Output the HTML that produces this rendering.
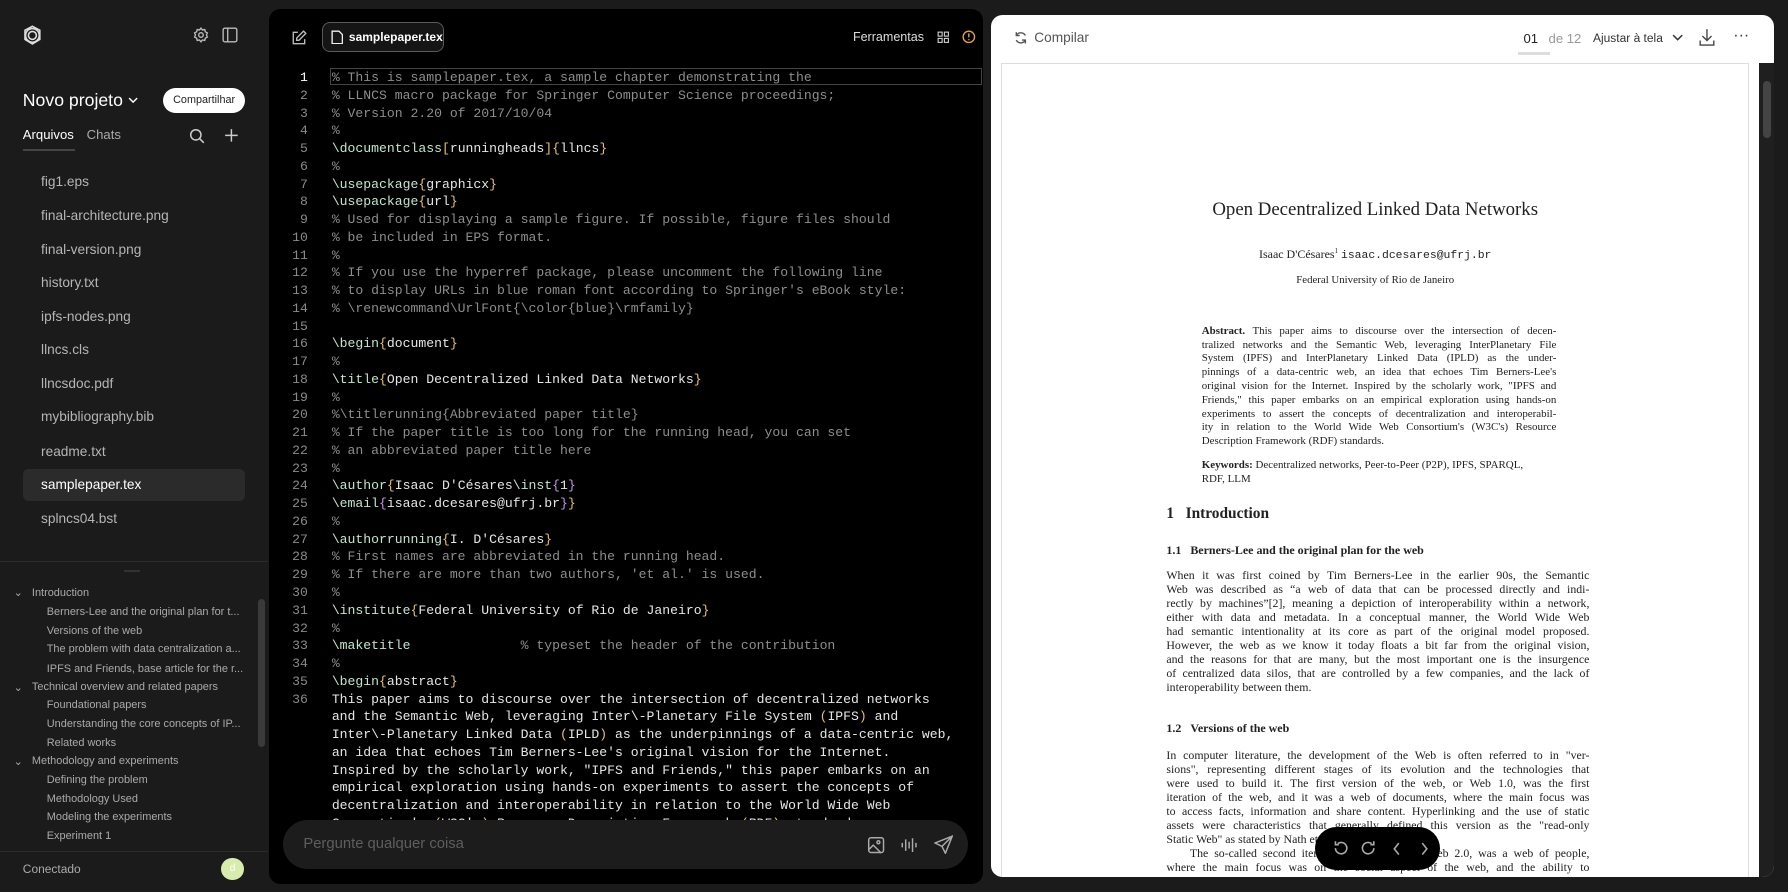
<!DOCTYPE html>
<html><head><meta charset="utf-8">
<style>
*{margin:0;padding:0;box-sizing:border-box}
html,body{width:1788px;height:892px;overflow:hidden;background:#1b1b1b}
#w{zoom:1.14031;width:1568px;height:782px;position:relative;font-family:"Liberation Sans",sans-serif;color:#ddd}
.a{position:absolute;white-space:nowrap}
.f{font-size:12px;color:#b5b5b5;left:36px}
.o{font-size:9.6px;color:#aaa}
#ed{position:absolute;left:236px;top:8px;width:626px;height:767px;background:#000;border-radius:10px;overflow:hidden}
.ln{position:absolute;left:0;width:34px;text-align:right;font:11.5px "Liberation Mono",monospace;color:#8a8a8a}
.cd{position:absolute;left:55px;font:11.5px "Liberation Mono",monospace;color:#e6e6e6;white-space:pre}
.c{color:#8d8d8d}.k{color:#bfe6cf}.b{color:#e8c06a}.m{color:#c792ea}
#pdf{position:absolute;left:869px;top:13px;width:687px;height:756px;background:#fff;border-radius:10px;overflow:hidden}
#pg{position:absolute;left:9px;top:42px;width:656px;height:720px;border:1px solid #ddd;background:#fff;font-family:"Liberation Serif",serif;color:#222}
.p{position:absolute;text-align:justify;text-align-last:justify;white-space:nowrap;font-size:10.4px}
</style></head><body><div id="w">
<svg class="a" style="left:18px;top:21px" width="20" height="20" viewBox="0 0 20 20" fill="none" stroke="#ddd" stroke-width="1.4"><path d="M10 2l6.5 3.5v8L10 17.5 3.5 13.5v-8z"/><circle cx="10" cy="10" r="3.5"/><circle cx="10" cy="10" r="6"/></svg>
<svg class="a" style="left:169px;top:24px" width="14" height="14" viewBox="0 0 14 14" fill="none" stroke="#bbb" stroke-width="1.2"><circle cx="7" cy="7" r="2"/><path d="M7 1l1.3 1.6 2-.4.5 2 1.8 1L11.8 7l.8 1.8-1.8 1-.5 2-2-.4L7 13l-1.3-1.6-2 .4-.5-2-1.8-1L2.2 7l-.8-1.8 1.8-1 .5-2 2 .4z"/></svg>
<svg class="a" style="left:195px;top:24px" width="14" height="14" viewBox="0 0 14 14" fill="none" stroke="#bbb" stroke-width="1.2"><rect x="1" y="1" width="12" height="12" rx="1.5"/><path d="M5 1v12"/></svg>
<div class="a" style="left:20px;top:79px;font-size:15.5px;color:#fff">Novo projeto</div>
<svg class="a" style="left:112px;top:85px" width="9" height="6" viewBox="0 0 9 6" fill="none" stroke="#fff" stroke-width="1.3"><path d="M1 1l3.5 3.5L8 1"/></svg>
<div class="a" style="left:143px;top:77px;width:72px;height:22px;border-radius:11px;background:#fff;color:#222;font-size:9.5px;text-align:center;line-height:22px">Compartilhar</div>
<div class="a" style="left:20px;top:111px;font-size:11.5px;color:#fff">Arquivos</div>
<div class="a" style="left:76px;top:111px;font-size:11.5px;color:#aaa">Chats</div>
<div class="a" style="left:20px;top:131px;width:46px;height:1px;background:#444"></div>
<svg class="a" style="left:166px;top:112px" width="14" height="14" viewBox="0 0 14 14" fill="none" stroke="#ccc" stroke-width="1.3"><circle cx="6" cy="6" r="4.5"/><path d="M9.5 9.5l3.5 3.5"/></svg>
<svg class="a" style="left:196px;top:112px" width="13" height="13" viewBox="0 0 13 13" stroke="#ccc" stroke-width="1.3"><path d="M6.5 1v11M1 6.5h11"/></svg>
<div class="a" style="left:20px;top:411px;width:195px;height:28px;background:#2b2b2b;border-radius:5px"></div>
<div class="a f" style="top:153px">fig1.eps</div>
<div class="a f" style="top:182px">final-architecture.png</div>
<div class="a f" style="top:212px">final-version.png</div>
<div class="a f" style="top:241px">history.txt</div>
<div class="a f" style="top:271px">ipfs-nodes.png</div>
<div class="a f" style="top:300px">llncs.cls</div>
<div class="a f" style="top:330px">llncsdoc.pdf</div>
<div class="a f" style="top:359px">mybibliography.bib</div>
<div class="a f" style="top:389px">readme.txt</div>
<div class="a f" style="top:418px;color:#fff">samplepaper.tex</div>
<div class="a f" style="top:448px">splncs04.bst</div>
<div class="a" style="left:0;top:492px;width:235px;height:1px;background:#2c2c2c"></div>
<div class="a" style="left:109px;top:500px;width:14px;height:2px;background:#333"></div>
<div class="a o" style="left:12px;top:514px">⌄</div>
<div class="a o" style="left:28px;top:515px">Introduction</div>
<div class="a o" style="left:41px;top:531px">Berners-Lee and the original plan for t...</div>
<div class="a o" style="left:41px;top:548px">Versions of the web</div>
<div class="a o" style="left:41px;top:564px">The problem with data centralization a...</div>
<div class="a o" style="left:41px;top:581px">IPFS and Friends, base article for the r...</div>
<div class="a o" style="left:12px;top:597px">⌄</div>
<div class="a o" style="left:28px;top:597px">Technical overview and related papers</div>
<div class="a o" style="left:41px;top:613px">Foundational papers</div>
<div class="a o" style="left:41px;top:630px">Understanding the core concepts of IP...</div>
<div class="a o" style="left:41px;top:646px">Related works</div>
<div class="a o" style="left:12px;top:662px">⌄</div>
<div class="a o" style="left:28px;top:662px">Methodology and experiments</div>
<div class="a o" style="left:41px;top:679px">Defining the problem</div>
<div class="a o" style="left:41px;top:695px">Methodology Used</div>
<div class="a o" style="left:41px;top:711px">Modeling the experiments</div>
<div class="a o" style="left:41px;top:728px">Experiment 1</div>
<div class="a" style="left:226px;top:525px;width:6px;height:130px;background:#3a3a3a;border-radius:3px"></div>
<div class="a" style="left:0;top:746px;width:235px;height:1px;background:#2c2c2c"></div>
<div class="a" style="left:20px;top:756px;font-size:10.5px;color:#aaa">Conectado</div>
<div class="a" style="left:194px;top:752px;width:20px;height:20px;border-radius:50%;background:#d8ecae;color:#fff;font-size:9px;text-align:center;line-height:20px">d</div>
<div id="ed">
<svg class="a" style="left:19px;top:18px" width="14" height="14" viewBox="0 0 14 14" fill="none" stroke="#bbb" stroke-width="1.2"><path d="M6 2H2v10h10V8"/><path d="M11 1l2 2-6 6H5V7z"/></svg>
<div class="a" style="left:46px;top:11px;width:107px;height:27px;border:1px solid #5a5a5a;border-radius:7px;background:#151515"></div>
<svg class="a" style="left:54px;top:18px" width="11" height="13" viewBox="0 0 11 13" fill="none" stroke="#eee" stroke-width="1.2"><path d="M1 1h6l3 3v8H1z"/></svg>
<div class="a" style="left:70px;top:18px;font-size:10.5px;color:#fff;font-weight:bold">samplepaper.tex</div>
<div class="a" style="left:512px;top:18px;font-size:11px;color:#ddd">Ferramentas</div>
<svg class="a" style="left:586px;top:19px" width="11" height="11" viewBox="0 0 11 11" fill="none" stroke="#ccc" stroke-width="1"><rect x="1" y="1" width="3.5" height="3.5"/><rect x="6.5" y="1" width="3.5" height="3.5"/><rect x="1" y="6.5" width="3.5" height="3.5"/><rect x="6.5" y="6.5" width="3.5" height="3.5"/></svg>
<svg class="a" style="left:608px;top:18px" width="12" height="12" viewBox="0 0 12 12" fill="none" stroke="#e8a53a" stroke-width="1.2"><circle cx="6" cy="6" r="5"/><path d="M6 3v3.5M6 8v1"/></svg>
<div class="a" style="left:53px;top:52px;width:572px;height:15px;border:1px solid #444"></div>
<div id="code"></div>
<div class="a" style="left:12px;top:711px;width:601px;height:43px;background:#1c1c1c;border-radius:22px"></div>
<div class="a" style="left:30px;top:725px;font-size:13px;color:#5e5e5e">Pergunte qualquer coisa</div>
<svg class="a" style="left:524px;top:725px" width="16" height="16" viewBox="0 0 16 16" fill="none" stroke="#aaa" stroke-width="1.3"><rect x="1.5" y="1.5" width="13" height="13" rx="2"/><circle cx="10" cy="5.5" r="1.3"/><path d="M1.5 12l4-4 7 7"/></svg>
<svg class="a" style="left:553px;top:725px" width="16" height="16" viewBox="0 0 16 16" stroke="#aaa" stroke-width="1.3"><path d="M2 6v4M5 3v10M8 5v6M11 2v12M14 6v4"/></svg>
<svg class="a" style="left:583px;top:724px" width="17" height="17" viewBox="0 0 17 17" fill="none" stroke="#aaa" stroke-width="1.3"><path d="M16 1L1 7l6 3 3 6z M16 1L7 10"/></svg>
</div>
<div id="pdf">
<svg class="a" style="left:20px;top:14px" width="12" height="12" viewBox="0 0 12 12" fill="none" stroke="#555" stroke-width="1.2"><path d="M10 4A4.5 4.5 0 0 0 2 4M2 8a4.5 4.5 0 0 0 8 0M2 1v3h3M10 11V8H7"/></svg>
<div class="a" style="left:38px;top:13px;font-size:12px;color:#555">Compilar</div>
<div class="a" style="left:467px;top:14px;font-size:11.5px;color:#222">01</div>
<div class="a" style="left:462px;top:33px;width:28px;height:2px;background:#ddd"></div>
<div class="a" style="left:489px;top:14px;font-size:11.5px;color:#999">de 12</div>
<div class="a" style="left:528px;top:14px;font-size:10.5px;color:#333">Ajustar à tela</div>
<svg class="a" style="left:597px;top:17px" width="10" height="7" viewBox="0 0 10 7" fill="none" stroke="#333" stroke-width="1.3"><path d="M1 1l4 4 4-4"/></svg>
<svg class="a" style="left:621px;top:12px" width="14" height="16" viewBox="0 0 14 16" fill="none" stroke="#444" stroke-width="1.2"><path d="M7 1v10M3 7l4 4 4-4M1 11v4h12v-4"/></svg>
<div class="a" style="left:651px;top:11px;font-size:14px;color:#333">···</div>
<div class="a" style="left:674px;top:42px;width:13px;height:714px;background:#1f1f1f"></div>
<div class="a" style="left:677px;top:58px;width:7px;height:50px;background:#444;border-radius:4px"></div>
<div id="pg">
<div class="a" style="left:0;width:100%;text-align:center;top:119px;font-size:16.5px">Open Decentralized Linked Data Networks</div>
<div class="a" style="left:0;width:100%;text-align:center;top:161px;font-size:10.5px">Isaac D'Césares<sup style="font-size:6px">1</sup> <span style="font-family:'Liberation Mono',monospace;font-size:10px">isaac.dcesares@ufrj.br</span></div>
<div class="a" style="left:0;width:100%;text-align:center;top:184px;font-size:9.5px">Federal University of Rio de Janeiro</div>
<div id="abs"></div>
<div class="a" style="left:144px;top:387px;font-size:13.5px;font-weight:bold">1&nbsp;&nbsp;&nbsp;Introduction</div>
<div class="a" style="left:144px;top:420px;font-size:10.5px;font-weight:bold">1.1&nbsp;&nbsp;&nbsp;Berners-Lee and the original plan for the web</div>
<div id="b1"></div>
<div class="a" style="left:144px;top:576px;font-size:10.5px;font-weight:bold">1.2&nbsp;&nbsp;&nbsp;Versions of the web</div>
<div id="b2"></div>
</div>
<div class="a" style="left:284px;top:712px;width:110px;height:38px;background:#000;border-radius:19px"></div>
<svg class="a" style="left:299px;top:723px" width="16" height="16" viewBox="0 0 16 16" fill="none" stroke="#aaa" stroke-width="1.4"><path d="M3 8a5 5 0 1 0 2-4M3 2v3h3"/></svg>
<svg class="a" style="left:323px;top:723px" width="16" height="16" viewBox="0 0 16 16" fill="none" stroke="#aaa" stroke-width="1.4"><path d="M13 8a5 5 0 1 1-2-4M13 2v3h-3"/></svg>
<svg class="a" style="left:352px;top:725px" width="8" height="12" viewBox="0 0 8 12" fill="none" stroke="#aaa" stroke-width="1.4"><path d="M6 1L2 6l4 5"/></svg>
<svg class="a" style="left:376px;top:725px" width="8" height="12" viewBox="0 0 8 12" fill="none" stroke="#aaa" stroke-width="1.4"><path d="M2 1l4 5-4 5"/></svg>
</div>
</div>
<script>
var L=[
'<span class="c">% This is samplepaper.tex, a sample chapter demonstrating the</span>',
'<span class="c">% LLNCS macro package for Springer Computer Science proceedings;</span>',
'<span class="c">% Version 2.20 of 2017/10/04</span>',
'<span class="c">%</span>',
'<span class="k">\\documentclass</span><span class="b">[</span>runningheads<span class="b">]{</span>llncs<span class="b">}</span>',
'<span class="c">%</span>',
'<span class="k">\\usepackage</span><span class="b">{</span>graphicx<span class="b">}</span>',
'<span class="k">\\usepackage</span><span class="b">{</span>url<span class="b">}</span>',
'<span class="c">% Used for displaying a sample figure. If possible, figure files should</span>',
'<span class="c">% be included in EPS format.</span>',
'<span class="c">%</span>',
'<span class="c">% If you use the hyperref package, please uncomment the following line</span>',
'<span class="c">% to display URLs in blue roman font according to Springer\'s eBook style:</span>',
'<span class="c">% \\renewcommand\\UrlFont{\\color{blue}\\rmfamily}</span>',
'',
'<span class="k">\\begin</span><span class="b">{</span>document<span class="b">}</span>',
'<span class="c">%</span>',
'<span class="k">\\title</span><span class="b">{</span>Open Decentralized Linked Data Networks<span class="b">}</span>',
'<span class="c">%</span>',
'<span class="c">%\\titlerunning{Abbreviated paper title}</span>',
'<span class="c">% If the paper title is too long for the running head, you can set</span>',
'<span class="c">% an abbreviated paper title here</span>',
'<span class="c">%</span>',
'<span class="k">\\author</span><span class="b">{</span>Isaac D\'Césares<span class="k">\\inst</span><span class="m">{</span>1<span class="m">}</span>',
'<span class="k">\\email</span><span class="m">{</span>isaac.dcesares@ufrj.br<span class="m">}</span><span class="b">}</span>',
'<span class="c">%</span>',
'<span class="k">\\authorrunning</span><span class="b">{</span>I. D\'Césares<span class="b">}</span>',
'<span class="c">% First names are abbreviated in the running head.</span>',
'<span class="c">% If there are more than two authors, \'et al.\' is used.</span>',
'<span class="c">%</span>',
'<span class="k">\\institute</span><span class="b">{</span>Federal University of Rio de Janeiro<span class="b">}</span>',
'<span class="c">%</span>',
'<span class="k">\\maketitle</span>              <span class="c">% typeset the header of the contribution</span>',
'<span class="c">%</span>',
'<span class="k">\\begin</span><span class="b">{</span>abstract<span class="b">}</span>',
'This paper aims to discourse over the intersection of decentralized networks',
'and the Semantic Web, leveraging Inter\\-Planetary File System <span class="b">(</span>IPFS<span class="b">)</span> and',
'Inter\\-Planetary Linked Data <span class="b">(</span>IPLD<span class="b">)</span> as the underpinnings of a data-centric web,',
'an idea that echoes Tim Berners-Lee\'s original vision for the Internet.',
'Inspired by the scholarly work, "IPFS and Friends," this paper embarks on an',
'empirical exploration using hands-on experiments to assert the concepts of',
'decentralization and interoperability in relation to the World Wide Web',
'Consortium\'s <span class="b">(</span>W3C\'s<span class="b">)</span> Resource Description Framework <span class="b">(</span>RDF<span class="b">)</span> standards.'];
var h='';for(var i=0;i<L.length;i++){var t=53.5+i*15.57;if(i<36)h+='<div class="ln" style="top:'+t+'px;'+(i==0?'color:#fff':'')+'">'+(i+1)+'</div>';h+='<div class="cd" style="top:'+t+'px">'+L[i]+'</div>';}
document.getElementById('code').innerHTML=h;
function P(id,x,y,w,s,lh,arr,last){var o='';for(var i=0;i<arr.length;i++){var st='left:'+x+'px;top:'+(y+i*lh)+'px;width:'+w+'px;font-size:'+s+'px;';if(last&&i==arr.length-1)st+='text-align-last:left;';o+='<div class="p" style="'+st+'">'+arr[i]+'</div>';}document.getElementById(id).innerHTML=o;}
P('abs',175,229,311,9.6,12.1,['<b>Abstract.</b> This paper aims to discourse over the intersection of decen-','tralized networks and the Semantic Web, leveraging InterPlanetary File','System (IPFS) and InterPlanetary Linked Data (IPLD) as the under-','pinnings of a data-centric web, an idea that echoes Tim Berners-Lee\'s','original vision for the Internet. Inspired by the scholarly work, "IPFS and','Friends," this paper embarks on an empirical exploration using hands-on','experiments to assert the concepts of decentralization and interoperabil-','ity in relation to the World Wide Web Consortium\'s (W3C\'s) Resource','Description Framework (RDF) standards.'],1);
var k=document.createElement('div');k.innerHTML='<div class="p" style="left:175px;top:347px;width:320px;font-size:9.6px;text-align-last:left"><b>Keywords:</b> Decentralized networks, Peer-to-Peer (P2P), IPFS, SPARQL,</div><div class="p" style="left:175px;top:359px;font-size:9.6px;text-align-last:left">RDF, LLM</div>';document.getElementById('pg').appendChild(k);
P('b1',144,442,371,10.4,12.3,['When it was first coined by Tim Berners-Lee in the earlier 90s, the Semantic','Web was described as “a web of data that can be processed directly and indi-','rectly by machines”[2], meaning a depiction of interoperability within a network,','either with data and metadata. In a conceptual manner, the World Wide Web','had semantic intentionality at its core as part of the original model proposed.','However, the web as we know it today floats a bit far from the original vision,','and the reasons for that are many, but the most important one is the insurgence','of centralized data silos, that are controlled by a few companies, and the lack of','interoperability between them.'],1);
P('b2',144,600,371,10.4,12.3,['In computer literature, the development of the Web is often referred to in "ver-','sions", representing different stages of its evolution and the technologies that','were used to build it. The first version of the web, or Web 1.0, was the first','iteration of the web, and it was a web of documents, where the main focus was','to access facts, information and share content. Hyperlinking and the use of static','assets were characteristics that generally defined this version as the "read-only','Static Web" as stated by Nath et al. [3].','&nbsp;&nbsp;&nbsp;&nbsp;The so-called second iteration of the web, or Web 2.0, was a web of people,','where the main focus was on the social aspect of the web, and the ability to'],0);
document.querySelector('#b2 .p:nth-child(7)').style.textAlignLast='left';
</script>
</body></html>
